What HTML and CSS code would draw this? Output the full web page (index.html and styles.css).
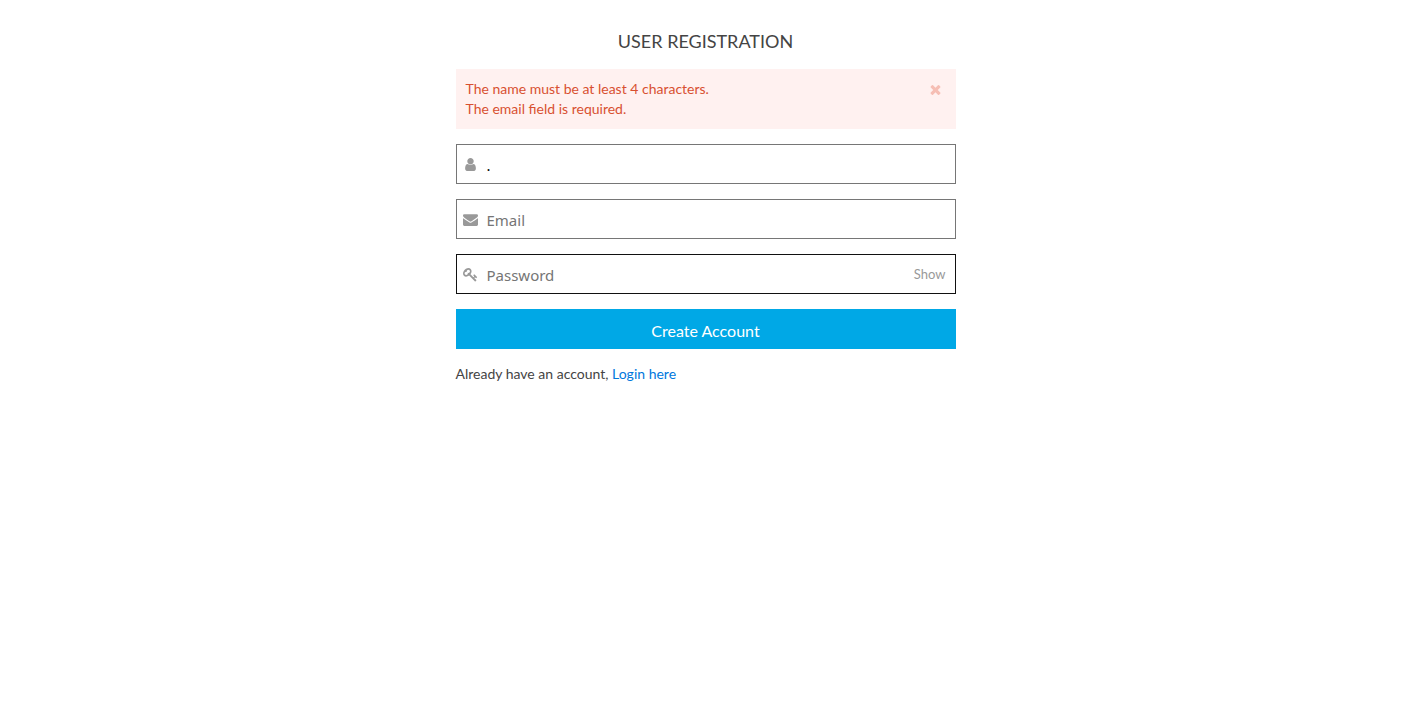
FILE: index.html
```html
<!DOCTYPE html>
<html lang="en">
<head>
<meta charset="utf-8">
<meta name="viewport" content="width=device-width, initial-scale=1">
<title>User Registration</title>
<link rel="stylesheet" href="styles.css">
</head>
<body>
<main class="register">
  <h1 class="title">USER REGISTRATION</h1>
  <form class="form" novalidate>
    <div class="alert" role="alert">
      <div class="alert-text">
        <p>The name must be at least 4 characters.</p>
        <p>The email field is required.</p>
      </div>
      <button class="alert-close" type="button" aria-label="Dismiss">
        <svg class="icon" viewBox="0 0 1792 1792" aria-hidden="true"><path d="M1490 1322q0 40-28 68l-136 136q-28 28-68 28t-68-28l-294-294-294 294q-28 28-68 28t-68-28l-136-136q-28-28-28-68t28-68l294-294-294-294q-28-28-28-68t28-68l136-136q28-28 68-28t68 28l294 294 294-294q28-28 68-28t68 28l136 136q28 28 28 68t-28 68l-294 294 294 294q28 28 28 68z"/></svg>
      </button>
    </div>
    <div class="field">
      <label class="field-icon" for="name" aria-label="Name">
        <svg class="icon" viewBox="0 0 1792 1792" aria-hidden="true"><path d="M1536 1399q0 109-62.5 187t-150.5 78h-854q-88 0-150.5-78t-62.5-187q0-85 8.5-160.5t31.5-152 58.5-131 94-89 134.5-34.5q131 128 313 128t313-128q76 0 134.5 34.5t94 89 58.5 131 31.5 152 8.5 160.5zm-256-887q0 159-112.5 271.5t-271.5 112.5-271.5-112.5-112.5-271.5 112.5-271.5 271.5-112.5 271.5 112.5 112.5 271.5z"/></svg>
      </label>
      <input class="input" id="name" name="name" type="text" value=".">
    </div>
    <div class="field">
      <label class="field-icon" for="email" aria-label="Email">
        <svg class="icon" viewBox="0 0 1792 1792" aria-hidden="true"><path d="M1792 710v794q0 66-47 113t-113 47h-1472q-66 0-113-47t-47-113v-794q44 49 101 87 362 246 497 345 57 42 92.5 65.5t94.5 48 110 24.5h2q51 0 110-24.5t94.5-48 92.5-65.5q170-123 498-345 57-39 100-87zm0-294q0 79-49 151t-122 123q-376 261-468 325-10 7-42.5 31t-54 38.5-52 32.5-57.5 27-50 9h-2q-23 0-50-9t-57.5-27-52-32.5-54-38.5-42.5-31q-91-64-262-182.5t-205-142.5q-62-42-117-115.5t-55-136.5q0-78 41.5-130t118.5-52h1472q65 0 112.5 47t47.5 113z"/></svg>
      </label>
      <input class="input" id="email" name="email" type="email" placeholder="Email">
    </div>
    <div class="field field-active">
      <label class="field-icon" for="password" aria-label="Password">
        <svg class="icon" viewBox="0 0 1792 1792" aria-hidden="true"><path d="M832 512q0-80-56-136t-136-56-136 56-56 136q0 42 19 83-41-19-83-19-80 0-136 56t-56 136 56 136 136 56 136-56 56-136q0-42-19-83 41 19 83 19 80 0 136-56t56-136zm851 704q0 17-49 66t-66 49q-9 0-28.5-16t-36.5-33-38.5-40-24.5-26l-96 96 220 220q28 28 28 68 0 42-39 81t-81 39q-40 0-68-28l-671-671q-176 131-365 131-163 0-265.5-102.5t-102.5-265.5q0-160 95-313t248-248 313-95q163 0 265.5 102.5t102.5 265.5q0 189-131 365l355 355 96-96q-3-3-26-24.5t-40-38.5-33-36.5-16-28.5q0-17 49-66t66-49q13 0 23 10 6 6 46 44.5t82 79.5 86.5 86 73 78 28.5 41z"/></svg>
      </label>
      <input class="input" id="password" name="password" type="password" placeholder="Password">
      <button class="show" type="button">Show</button>
    </div>
    <button class="submit" type="submit">Create Account</button>
  </form>
  <p class="login">Already have an account, <a class="link" href="#login">Login here</a></p>
</main>
</body>
</html>
```
FILE: styles.css
```css
* {
  box-sizing: border-box;
}

body {
  margin: 0;
  background: #fff;
  color: #444;
  font: 14px/20px Lato, sans-serif;
}

p {
  margin: 0;
}

button {
  border: 0;
  padding: 0;
  background: none;
  font-family: inherit;
  cursor: pointer;
}

.register {
  max-width: 500px;
  margin: 0 auto;
  padding-top: 29px;
}

.title {
  margin: 0 0 16px;
  font-size: 18px;
  font-weight: 400;
  line-height: 24px;
  text-align: center;
}

.form {
  display: flex;
  flex-direction: column;
  gap: 15px;
}

.icon {
  display: block;
  width: 15px;
  height: 15px;
  fill: currentColor;
}

.alert {
  display: flex;
  justify-content: space-between;
  align-items: flex-start;
  padding: 10px;
  background: #fff1f0;
  color: #d85030;
}

.alert-close {
  padding: 3px;
  color: #f6beb4;
}

.field {
  display: flex;
  align-items: center;
  height: 40px;
  border: 1px solid #767676;
}

.field-active {
  border-color: #111;
}

.field-icon {
  padding: 0 9px 0 6px;
  color: #999;
}

.input {
  flex: 1;
  min-width: 0;
  height: 100%;
  border: 0;
  padding: 2px 0 0;
  outline: 0;
  background: none;
  color: #000;
  font: 15px "Noto Sans", sans-serif;
}

.input::placeholder {
  color: #757575;
}

.show {
  padding: 0 9px;
  color: #999;
  font-size: 13px;
  line-height: 20px;
}

.submit {
  height: 40px;
  padding-top: 3px;
  background: #00a8e6;
  color: #fff;
  font-size: 16px;
  line-height: 20px;
}

.login {
  margin-top: 15px;
}

.link {
  color: #07d;
  text-decoration: none;
}
```
